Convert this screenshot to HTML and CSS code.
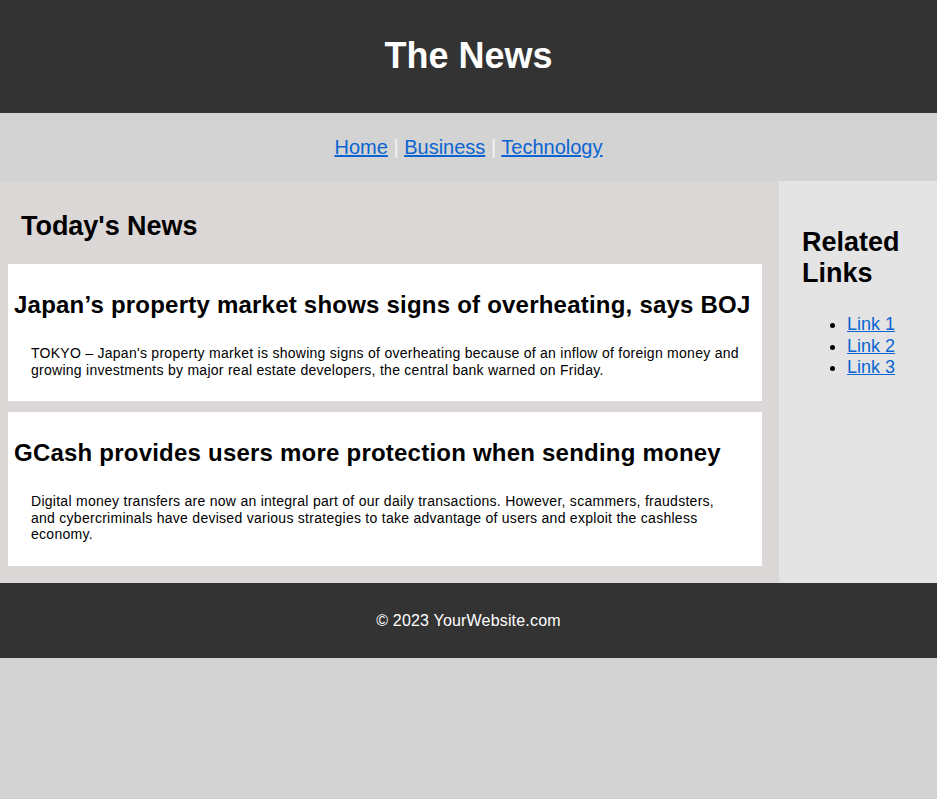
FILE: index.html
```html
<!DOCTYPE html>
<html lang="en">
<head>
<meta charset="utf-8">
<title>The News</title>
<link rel="stylesheet" href="styles.css">
</head>
<body>
<header class="site-header">
  <h1 class="site-title">The News</h1>
</header>
<nav class="site-nav">
  <a href="#">Home</a> | <a href="#">Business</a> | <a href="#">Technology</a>
</nav>
<div class="main">
  <section class="news">
    <h2 class="news-title">Today's News</h2>
    <article class="article">
      <h3 class="article-title">Japan’s property market shows signs of overheating, says BOJ</h3>
      <p class="article-text">TOKYO – Japan's property market is showing signs of overheating because of an inflow of foreign money and growing investments by major real estate developers, the central bank warned on Friday.</p>
    </article>
    <article class="article">
      <h3 class="article-title">GCash provides users more protection when sending money</h3>
      <p class="article-text">Digital money transfers are now an integral part of our daily transactions. However, scammers, fraudsters, and cybercriminals have devised various strategies to take advantage of users and exploit the cashless economy.</p>
    </article>
  </section>
  <aside class="sidebar">
    <h2 class="sidebar-title">Related Links</h2>
    <ul class="sidebar-links">
      <li><a href="#">Link 1</a></li>
      <li><a href="#">Link 2</a></li>
      <li><a href="#">Link 3</a></li>
    </ul>
  </aside>
</div>
<footer class="site-footer">
  <p class="copyright">© 2023 YourWebsite.com</p>
</footer>
</body>
</html>
```
FILE: styles.css
```css
body {
  margin: 0;
  background: #d3d3d3;
  font-family: "Liberation Sans", Arial, sans-serif;
  color: #000;
}

a {
  color: #0a64d2;
}

.site-header {
  background: #333333;
  padding: 35px 0 37px;
}

.site-title {
  margin: 0;
  color: #fff;
  text-align: center;
  font-size: 36px;
  line-height: 41px;
  font-weight: bold;
}

.site-nav {
  padding: 23px 0 22px;
  text-align: center;
  font-size: 20px;
  line-height: 23px;
  color: #f4f4f4;
}

.main {
  display: flex;
}

.news {
  flex: 1;
  background: #dbd7d6;
  padding: 0 17px 17px 8px;
}

.news-title {
  margin: 30px 0 22px 13px;
  font-size: 27px;
  line-height: 31px;
  letter-spacing: -0.05px;
}

.article {
  background: #fff;
  padding: 0 6px;
  height: 137px;
  box-sizing: border-box;
  overflow: hidden;
}

.article + .article {
  margin-top: 11px;
  height: 154px;
}

.article-title {
  margin: 27px 0 0;
  font-size: 24px;
  line-height: 28px;
  letter-spacing: 0.22px;
}

.article-text {
  margin: 26px 0 0;
  padding: 0 15px 0 17px;
  font-size: 14px;
  line-height: 16.5px;
  letter-spacing: 0.27px;
}

.sidebar {
  width: 158px;
  box-sizing: border-box;
  background: #e4e4e4;
  padding: 0 14px 0 23px;
}

.sidebar-title {
  margin: 46px 0 0;
  font-size: 27px;
  line-height: 31px;
}

.sidebar-links {
  margin: 25px 0 0;
  padding-left: 45px;
  font-size: 18px;
  line-height: 21.5px;
}

.site-footer {
  background: #333333;
  padding: 29px 0 28px;
  text-align: center;
  color: #fff;
}

.copyright {
  margin: 0;
  font-size: 16px;
  line-height: 18px;
  letter-spacing: 0.18px;
}
```
